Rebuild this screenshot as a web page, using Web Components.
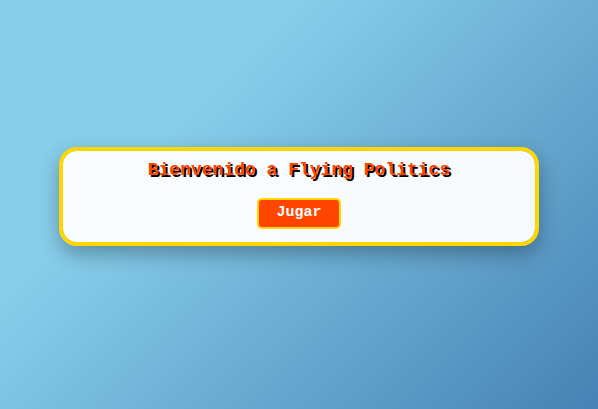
<!DOCTYPE html>
<html lang="es">
<head>
<meta charset="utf-8">
<meta name="viewport" content="width=device-width, initial-scale=1">
<title>Flying Politics</title>
<style>
html, body { height: 100%; margin: 0; }
body { font-family: "Liberation Mono", "Courier New", monospace; font-weight: 700; }
</style>
</head>
<body>
<sky-page>
  <welcome-card>
    <span slot="title">Bienvenido a Flying Politics</span>
    <game-button>Jugar</game-button>
  </welcome-card>
</sky-page>
<script>
class BaseElement extends HTMLElement {
  constructor() {
    super();
    this.attachShadow({ mode: "open" }).innerHTML = this.constructor.markup;
  }
}

class SkyPage extends BaseElement {
  static markup = `
    <style>
      :host {
        display: block;
        height: 100%;
        background: linear-gradient(135deg, #87ceeb 30%, #4682b4 100%);
      }
      main {
        box-sizing: border-box;
        min-height: 100%;
        display: grid;
        align-items: center;
        padding: 0 59px 16px;
      }
    </style>
    <main><slot></slot></main>`;
}

class WelcomeCard extends BaseElement {
  static markup = `
    <style>
      :host {
        display: flex;
        flex-direction: column;
        align-items: center;
        gap: 17px;
        padding: 8px 16px 13px;
        border: 4px solid #ffd700;
        border-radius: 18px;
        background: rgba(255, 255, 255, 0.95);
        background-clip: padding-box;
        box-shadow: 0 8px 20px rgba(0, 0, 0, 0.3);
      }
      h1 {
        margin: 0;
        font-size: 18px;
        line-height: 22px;
        text-align: center;
        color: #ff4500;
        text-shadow: 2px 2px 0 #000;
      }
    </style>
    <h1><slot name="title"></slot></h1>
    <slot></slot>`;
}

class GameButton extends BaseElement {
  static markup = `
    <style>
      :host { display: inline-flex; }
      button {
        padding: 5px 17px 6px;
        border: 2px solid #ffd700;
        border-radius: 5px;
        background: #ff4500;
        color: #fff;
        font: inherit;
        font-size: 15px;
        line-height: 16px;
        cursor: pointer;
      }
    </style>
    <button type="button"><slot></slot></button>`;
}

customElements.define("sky-page", SkyPage);
customElements.define("welcome-card", WelcomeCard);
customElements.define("game-button", GameButton);
</script>
</body>
</html>
